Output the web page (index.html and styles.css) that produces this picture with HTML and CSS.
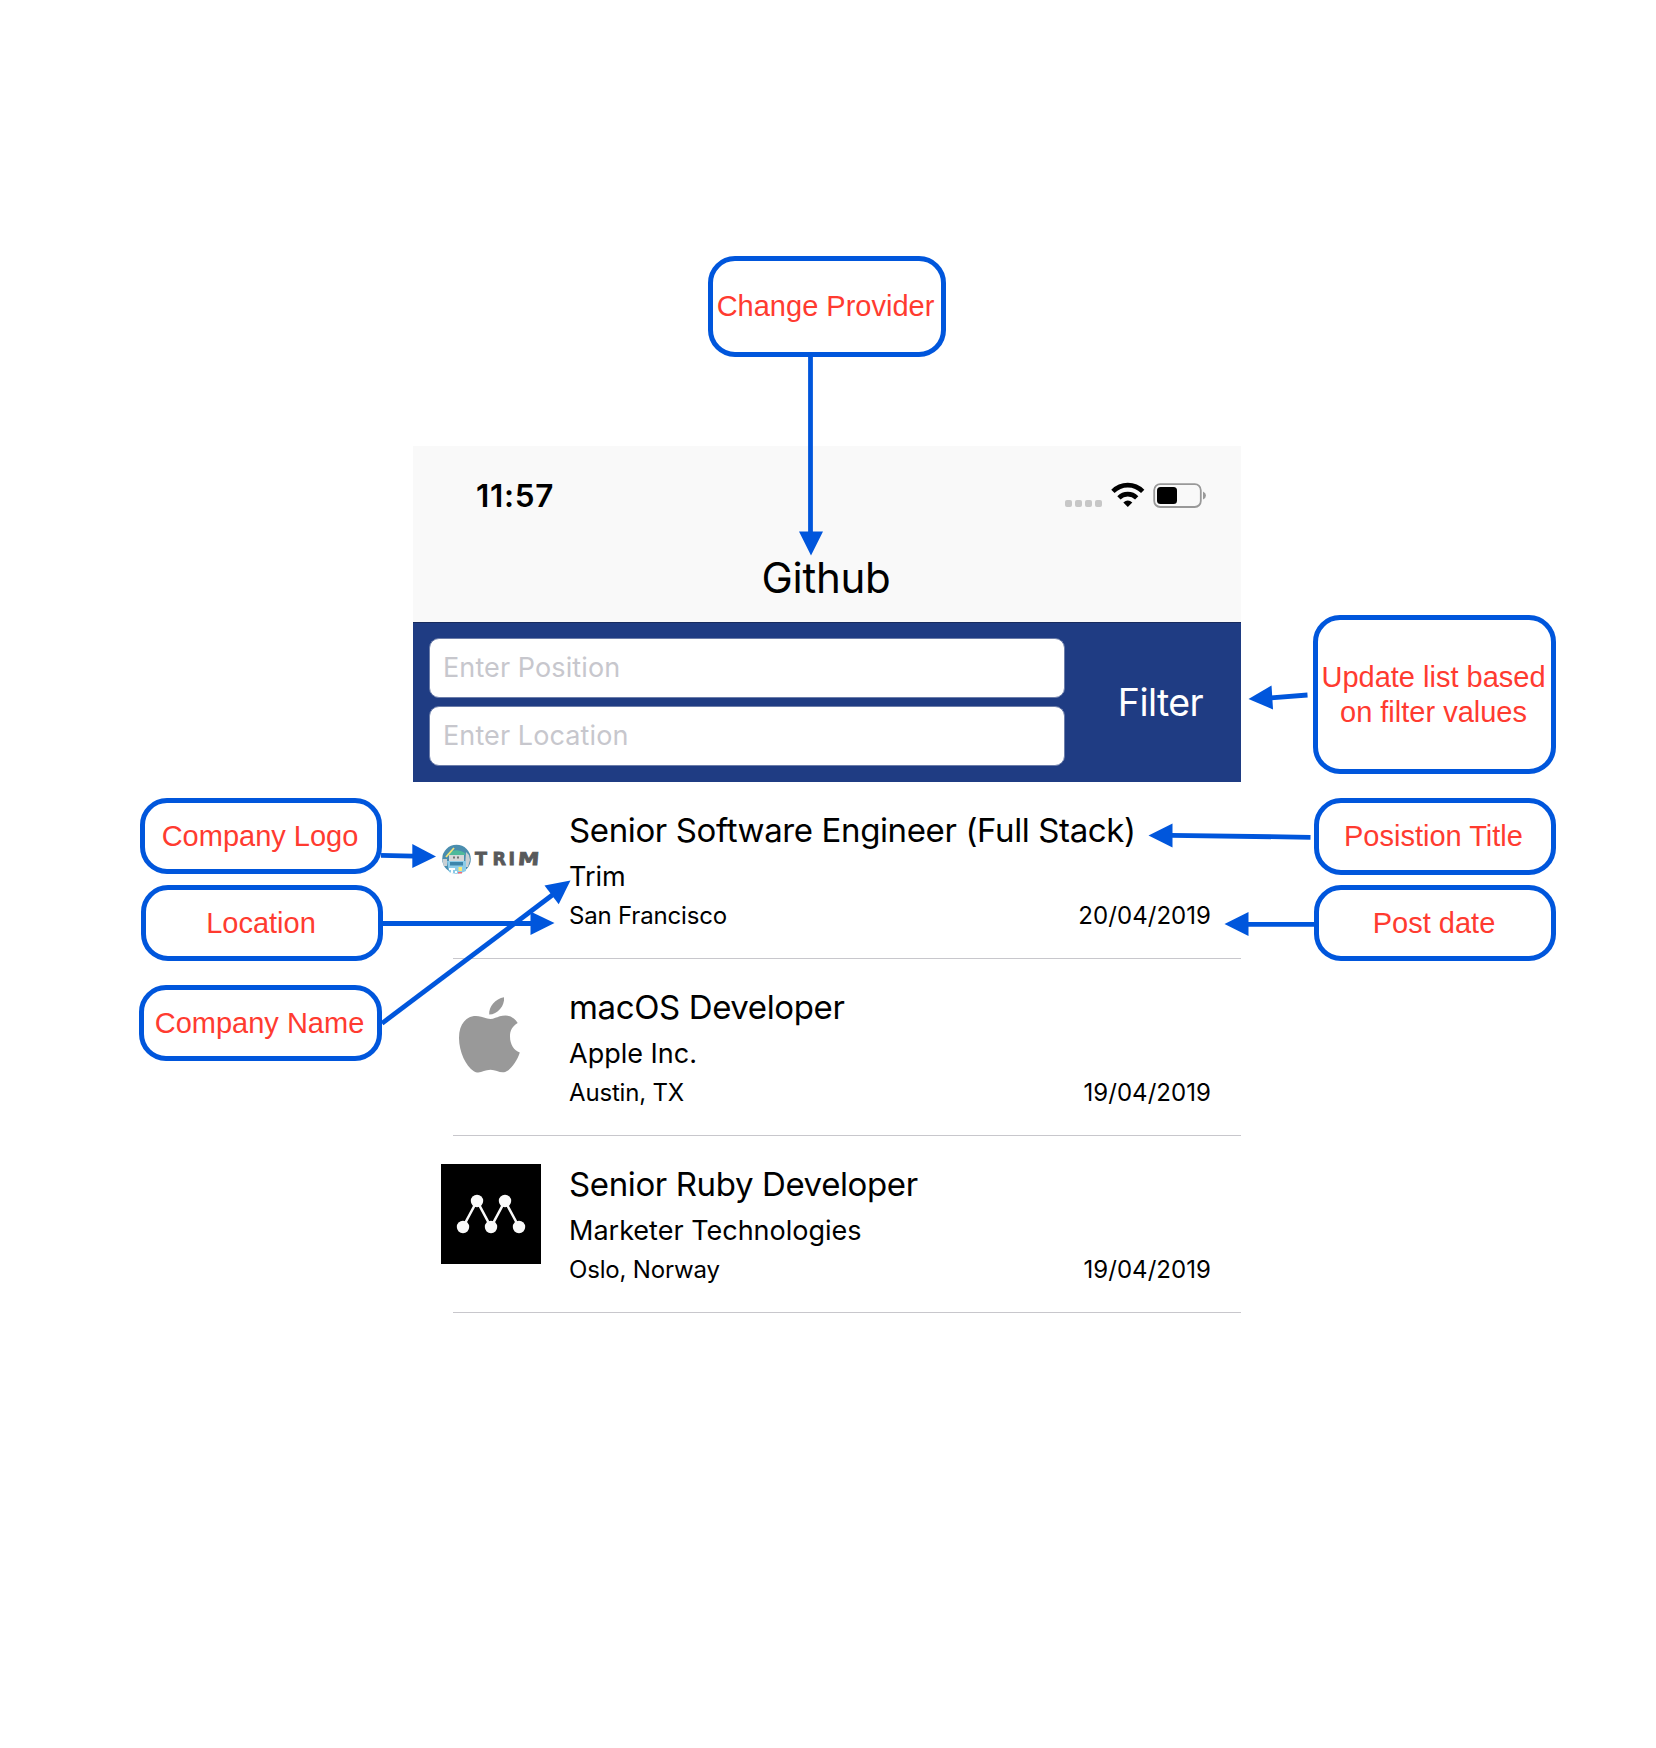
FILE: index.html
```html
<!DOCTYPE html>
<html lang="en">
<head>
<meta charset="utf-8">
<title>Job list</title>
<link rel="stylesheet" href="styles.css">
</head>
<body>
<main class="phone">
  <header class="header">
    <div class="status">
      <span class="time">11:57</span>
      <svg class="status-icons" width="144" height="28" viewBox="0 0 144 28">
        <g fill="#c7c7c7"><rect x="0" y="18" width="7" height="7" rx="2"/><rect x="10" y="18" width="7" height="7" rx="2"/><rect x="20" y="18" width="7" height="7" rx="2"/><rect x="30" y="18" width="7" height="7" rx="2"/></g>
        <g fill="none" stroke="#000" stroke-width="4.6"><path d="M47.900 9.400A20.800 20.800 0 0 1 77.700 9.400"/><path d="M53.900 15.800A12.600 12.600 0 0 1 71.700 15.800"/></g>
        <path d="M58.300 20.500Q62.800 16.600 67.300 20.500L62.800 25Z"/>
        <rect x="89.200" y="2.200" width="46.600" height="22.800" rx="6" fill="none" stroke="#999" stroke-width="1.800"/>
        <rect x="92" y="5" width="20" height="17" rx="3.500"/>
        <path d="M138 9.500Q141 10.800 141 13.500T138 17.500Z" fill="#999"/>
      </svg>
    </div>
    <h1 class="provider">Github</h1>
  </header>
  <form class="filter">
    <div class="fields">
      <div class="field">Enter Position</div>
      <div class="field">Enter Location</div>
    </div>
    <div class="filter-button">Filter</div>
  </form>
  <section class="jobs">
    <article class="job">
      <svg class="logo" width="100" height="100" viewBox="0 0 100 100">
        <circle cx="15.500" cy="49" r="14.300" fill="#4a8dae"/>
        <path d="M1.500 49h4.500v7H2.500zM25 42l3 3 1 5-2 7h-3z" fill="#c9d0d4"/>
        <path d="M8 44h15v7H8z" fill="#d5d7d8"/>
        <path d="M6 44q9-7 18-1v2H6z" fill="#4fb99b"/>
        <path d="M5 47l8-9" stroke="#f3e37a" stroke-width="1.800"/>
        <path d="M13 46.500v2M17 46.500v2" stroke="#333" stroke-width="1.200"/>
        <path d="M6 51h19v10q-9 5-17 1z" fill="#8bcbe8"/>
        <path d="M9 52h13v3.500H9z" fill="#3c85ab"/>
        <path d="M8 58h6v2H8zM10 60h2v3h-2zM14 61h2v2h-2z" fill="#fff"/>
        <path d="M17.500 57h3.500v4h-3.500z" fill="#f7ea77"/>
        <path d="M17 62h4v1.500h-4z" fill="#ef6a78"/>
        <text class="wordmark" x="34 51.500 67.500" y="55">TRI</text>
        <text class="wordmark" transform="translate(76.500 55) skewX(-5) scale(1.220 1)">M</text>
      </svg>
      <div class="info">
        <h2>Senior Software Engineer (Full Stack)</h2>
        <p class="company">Trim</p>
        <p class="meta"><span>San Francisco</span><time>20/04/2019</time></p>
      </div>
    </article>
    <article class="job">
      <svg class="logo" width="100" height="100" viewBox="0 0 100 100">
        <g fill="#999"><path d="M63 10.200C64 18.500 56.500 27.500 48.200 27.600C47.400 19.500 54.500 11.500 63 10.200Z"/>
        <path d="M76.700 36C71 39.500 68.900 44 69 49.500C69 57.500 73 63.500 78.800 65.500C76.500 73 71.500 80 67 83.500C60.500 88 56.500 82.800 49.500 82.800C42.500 82.800 38.500 88 32.500 84C25 79 18 65 18 51C18 36 26 29 35 29C41 29 45 32 49.500 32C53.500 32 58 28.500 64.500 28.500C69.500 28.700 74 31.500 76.700 36Z"/></g>
      </svg>
      <div class="info">
        <h2>macOS Developer</h2>
        <p class="company">Apple Inc.</p>
        <p class="meta"><span>Austin, TX</span><time>19/04/2019</time></p>
      </div>
    </article>
    <article class="job">
      <svg class="logo" width="100" height="100" viewBox="0 0 100 100">
        <rect width="100" height="100"/>
        <path d="M22 63L36 37L50 63L64 37L78 63" fill="none" stroke="#fafafa" stroke-width="2.500"/>
        <g fill="#fafafa"><circle cx="22" cy="63" r="6.200"/><circle cx="36" cy="37" r="6.200"/><circle cx="50" cy="63" r="6.200"/><circle cx="64" cy="37" r="6.200"/><circle cx="78" cy="63" r="6.200"/></g>
      </svg>
      <div class="info">
        <h2>Senior Ruby Developer</h2>
        <p class="company">Marketer Technologies</p>
        <p class="meta"><span>Oslo, Norway</span><time>19/04/2019</time></p>
      </div>
    </article>
  </section>
</main>
<div class="callout provider-note">Change Provider</div>
<div class="callout filter-note"><span>Update list based</span><span>on filter values</span></div>
<div class="callout logo-note">Company Logo</div>
<div class="callout location-note">Location</div>
<div class="callout company-note">Company Name</div>
<div class="callout title-note">Posistion Title</div>
<div class="callout date-note">Post date</div>
<svg class="arrows" width="1656" height="1748" viewBox="0 0 1656 1748">
  <g fill="none" stroke="#0056dc" stroke-width="4.800">
    <path d="M810.500 354V534"/><path d="M381 855.300L414 856.200"/><path d="M382 923.500H532"/><path d="M382 1023.300L553 894.500"/>
    <path d="M1310.500 837.300L1171 835.300"/><path d="M1315 924.300H1247"/><path d="M1307.500 695L1271 697.800"/>
  </g>
  <g fill="#0056dc">
    <path d="M799 531.500H823L811 555.500Z"/><path d="M412.300 844V868L436 856.500Z"/><path d="M530.500 911.500V935L554.500 923Z"/>
    <path d="M544.500 885.500L558.700 904.300L570.500 880.500Z"/><path d="M1172.500 823.500V847.500L1148.500 835.500Z"/>
    <path d="M1248.500 912V936L1224.500 924Z"/><path d="M1271.500 685.500L1273 709.500L1248.500 699Z"/>
  </g>
</svg>
</body>
</html>
```
FILE: styles.css
```css
* { box-sizing: border-box; margin: 0; }
body { position: relative; display: flow-root; width: 1656px; height: 1748px; overflow: hidden; background: #fff; color: #000; font-family: Inter, "Liberation Sans", sans-serif; }
.phone { width: 828px; margin: 446px 0 0 413px; }
.header { height: 176px; background: #f9f9f9; display: flex; flex-direction: column; }
.status { display: flex; justify-content: space-between; align-items: center; height: 100px; padding: 0 32px 0 63px; }
.time { font-size: 31.5px; font-weight: 600; line-height: 40px; letter-spacing: 0.7px; }
.status-icons { flex: none; }
.provider { font-size: 42px; font-weight: 400; line-height: 50px; margin-top: 7px; padding-right: 2px; text-align: center; letter-spacing: -0.3px; }
.filter { display: flex; height: 160px; padding: 15px 16px 0; background: #1f3c83; border-top: 1px solid #182b5e; }
.fields { display: flex; flex-direction: column; gap: 8px; width: 636px; }
.field { display: flex; align-items: center; height: 60px; padding: 0 0 2px 13px; border: 1px solid #6c7da9; border-radius: 10px; background: #fff; color: #c7c7cd; font-size: 27px; letter-spacing: 0.1px; }
.filter-button { flex: 1; display: flex; align-items: center; justify-content: flex-end; height: 128px; padding-right: 22px; color: #fff; font-size: 37.5px; letter-spacing: -0.6px; }
.job { position: relative; display: flex; gap: 28px; height: 177px; padding: 28px 30px 0 28px; }
.job::after { content: ""; position: absolute; left: 40px; right: 0; bottom: 0; height: 1px; background: #c8c7cc; }
.logo { flex: none; }
.wordmark { font: 700 17.500px "DejaVu Sans", sans-serif; fill: #58595b; stroke: #58595b; stroke-width: 0.8px; }
.info { flex: 1; }
.info h2 { font-size: 33px; font-weight: 400; line-height: 40px; letter-spacing: -0.38px; }
.company { margin-top: 10px; font-size: 27px; line-height: 34px; }
.meta { display: flex; justify-content: space-between; margin-top: 7px; font-size: 24px; line-height: 30px; letter-spacing: -0.18px; }
.meta time { letter-spacing: 0.05px; }
.callout { position: absolute; display: flex; flex-direction: column; align-items: center; justify-content: center; padding-right: 2px; border: 5px solid #0056dc; border-radius: 27px; background: #fff; color: #ff3b30; font: 29px/35px "Liberation Sans", sans-serif; white-space: nowrap; }
.provider-note { left: 708px; top: 256px; width: 238px; height: 101px; padding-right: 3px; }
.filter-note { left: 1313px; top: 615px; width: 243px; height: 159px; }
.logo-note { left: 140px; top: 798px; width: 242px; height: 76px; }
.location-note { left: 141px; top: 885px; width: 242px; height: 76px; }
.company-note { left: 139px; top: 985px; width: 243px; height: 76px; }
.title-note { left: 1314px; top: 798px; width: 242px; height: 77px; padding-right: 3px; }
.date-note { left: 1314px; top: 885px; width: 242px; height: 76px; }
.arrows { position: absolute; left: 0; top: 0; }
```
